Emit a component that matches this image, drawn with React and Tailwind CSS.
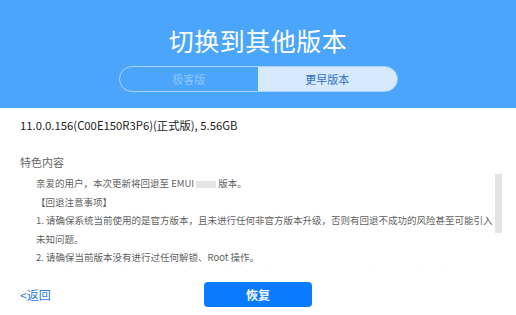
export default function App() {
  const font = { fontFamily: '"Microsoft YaHei", "Noto Sans CJK SC", "Noto Sans", sans-serif' };
  return (
    <div className="w-[516px] h-[315px] bg-white overflow-hidden relative" style={font}>
      <div className="h-[108px] bg-[#4ba5fb] flex flex-col items-center">
        <div className="mt-[20px] h-[40px] text-white text-[25px] leading-[40px] tracking-[0.5px]">切换到其他版本</div>
        <div className="mt-[6px] w-[279px] h-[26px] rounded-full border border-[#a9d3fd] flex overflow-hidden">
          <div className="flex-1 flex items-center justify-center text-[11px] text-[#8dc6ff]">极客版</div>
          <div className="flex-1 flex items-center justify-center text-[11px] text-[#2d6fc4] bg-[#d7e9fd]">更早版本</div>
        </div>
      </div>
      <div className="pl-[20px] pt-[9px] text-[11.3px] leading-[16px] text-[#222]">11.0.0.156(C00E150R3P6)(正式版), 5.56GB</div>
      <div className="pl-[20px] mt-[21px] text-[11px] leading-[16px] text-[#666]">特色内容</div>
      <div className="relative mt-[4px] h-[98px] overflow-hidden">
        <div className="pl-[36px] pr-[20px] text-[9.5px] leading-[18.5px] text-[#5f5f5f]">
          <div>亲爱的用户，本次更新将回退至 EMUI <span className="inline-block w-[20px] h-[7px] bg-[#e6e6e6] align-middle"></span> 版本。</div>
          <div>【回退注意事项】</div>
          <div>1. 请确保系统当前使用的是官方版本，且未进行任何非官方版本升级，否则有回退不成功的风险甚至可能引入</div>
          <div>未知问题。</div>
          <div>2. 请确保当前版本没有进行过任何解锁、Root 操作。</div>
          <div>3. 回退操作会擦除您的个人数据，请在回退前备份好您的重要数据，并确保电量充足后再进行回退操作。</div>
        </div>
        <div className="absolute left-[495px] top-[0px] w-[7px] h-[59px] bg-[#e4e4e4]"></div>
      </div>
      <div className="mt-[10px] flex items-center">
        <div className="pl-[20px] w-[204px] text-[12px] text-[#2b7be0]">&lt;返回</div>
        <div className="w-[108px] h-[25px] rounded-[4px] bg-[#0a7bff] text-white text-[12px] font-bold flex items-center justify-center">恢复</div>
      </div>
    </div>
  );
}
